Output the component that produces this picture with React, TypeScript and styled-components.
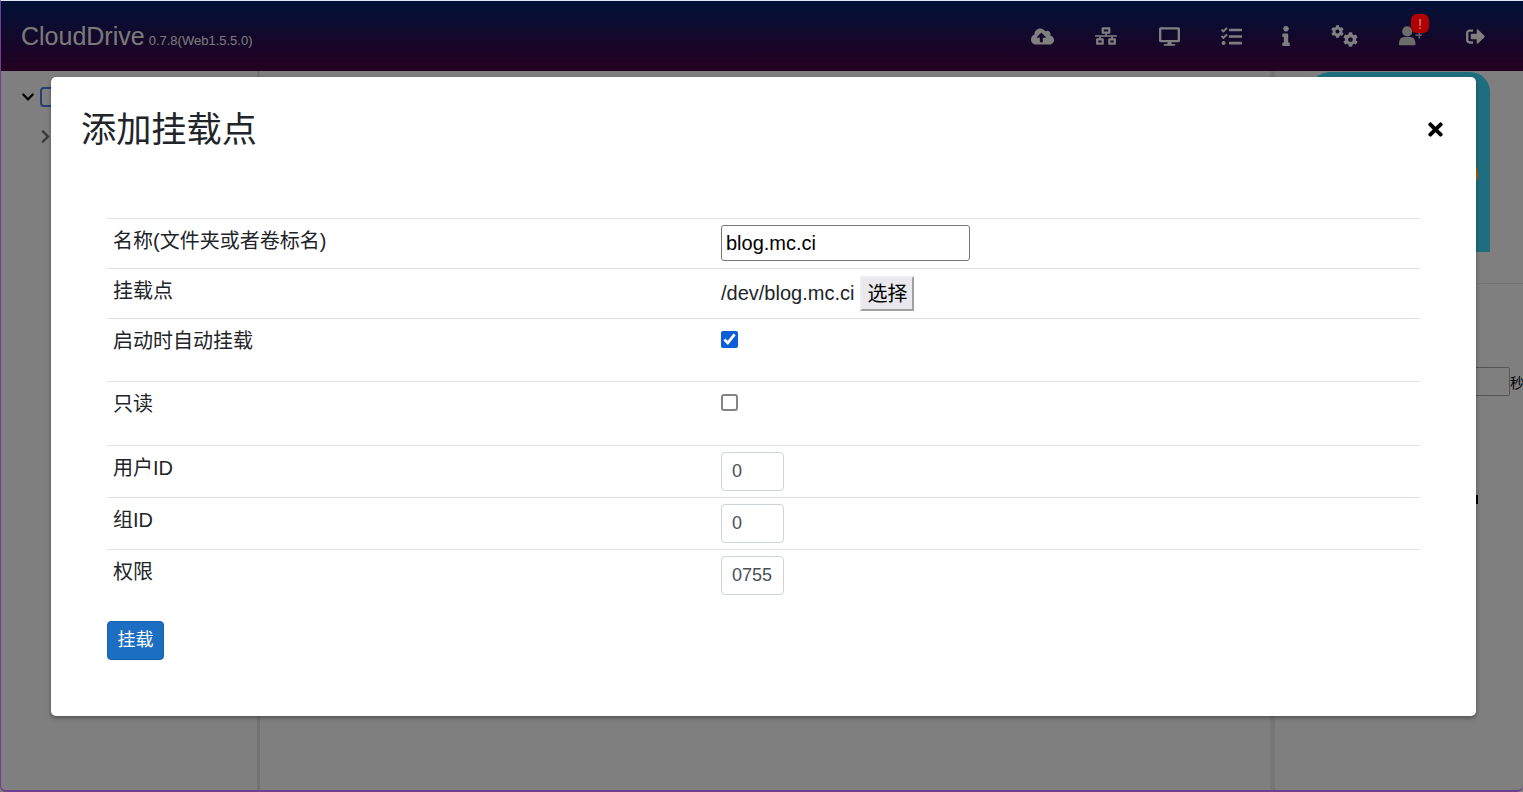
import React from "react";
import styled, { createGlobalStyle } from "styled-components";
import {
  FaChevronDown,
  FaChevronRight,
  FaCloudUploadAlt,
  FaCog,
  FaDesktop,
  FaInfo,
  FaNetworkWired,
  FaSignOutAlt,
  FaTasks,
  FaTimes,
} from "react-icons/fa";

const FONT = `"Liberation Sans", "Noto Sans CJK SC", sans-serif`;

const GlobalStyle = createGlobalStyle`
  html, body {
    margin: 0;
    height: 100%;
    overflow: hidden;
    background: #fff;
    font-family: ${FONT};
    color: #212529;
  }
  * { box-sizing: border-box; }
`;

// two separate gears, the package's cogs icon has another arrangement
const GearsIcon = () => (
  <Gears>
    <FaCog size={13} />
    <FaCog size={15} />
  </Gears>
);

const UserAddIcon = () => (
  <svg width="26" height="22" viewBox="0 0 26 22" fill="#d8d8d8">
    <circle cx="10" cy="6" r="5.5" />
    <path d="M1 20q0-8 6-8h6q6 0 6 8q0 1-1 1H2q-1 0-1-1z" />
    <path d="M23 6v8M19 10h8" stroke="#d8d8d8" strokeWidth="1.2" fill="none" />
  </svg>
);

const navIcons = [
  { icon: <FaCloudUploadAlt size={23} />, width: 24 },
  { icon: <FaNetworkWired size={22} />, width: 24 },
  { icon: <FaDesktop size={21} />, width: 22 },
  { icon: <FaTasks size={21} />, width: 22 },
  { icon: <FaInfo size={20} />, width: 8 },
  { icon: <GearsIcon />, width: 28 },
  { icon: <UserAddIcon />, width: 24, badge: true },
  { icon: <FaSignOutAlt size={19} />, width: 26 },
];

const App = () => {
  return (
    <Page>
      <GlobalStyle />
      <Navbar>
        <Brand>
          CloudDrive<Version>0.7.8(Web1.5.5.0)</Version>
        </Brand>
        <NavIcons>
          {navIcons.map(({ icon, width, badge }, i) => (
            <NavLink key={i} $width={width}>
              {icon}
              {badge && <Badge>!</Badge>}
            </NavLink>
          ))}
        </NavIcons>
      </Navbar>

      <Layout>
        <Sidebar>
          <TreeRow>
            <FaChevronDown size={14} color="#000" />
            <TreeFolder />
          </TreeRow>
          <TreeChild>
            <FaChevronRight size={15} color="#777" />
          </TreeChild>
        </Sidebar>
        <Main />
        <RightPanel>
          <StatusCard>
            <StatusDot />
          </StatusCard>
          <Settings>
            <SettingRow>
              <SettingInput />
              <SettingUnit>秒</SettingUnit>
            </SettingRow>
            <SettingMark />
          </Settings>
        </RightPanel>
      </Layout>

      <Backdrop />
      <WindowFrame />

      <Modal>
        <ModalHeader>
          <ModalTitle>添加挂载点</ModalTitle>
          <CloseButton>
            <FaTimes size={21} />
          </CloseButton>
        </ModalHeader>
        <ModalBody>
          <Row>
            <Label>名称(文件夹或者卷标名)</Label>
            <Value>
              <NameInput defaultValue="blog.mc.ci" />
            </Value>
          </Row>
          <Row>
            <Label>挂载点</Label>
            <Value $center>
              <PathText>/dev/blog.mc.ci</PathText>
              <PickButton>选择</PickButton>
            </Value>
          </Row>
          <Row>
            <Label>启动时自动挂载</Label>
            <Value $tall={50}>
              <Check type="checkbox" defaultChecked />
            </Value>
          </Row>
          <Row>
            <Label>只读</Label>
            <Value $tall={51}>
              <Check type="checkbox" />
            </Value>
          </Row>
          <Row>
            <Label>用户ID</Label>
            <Value>
              <NumberInput defaultValue="0" />
            </Value>
          </Row>
          <Row>
            <Label>组ID</Label>
            <Value>
              <NumberInput defaultValue="0" />
            </Value>
          </Row>
          <Row>
            <Label>权限</Label>
            <Value>
              <NumberInput defaultValue="0755" />
            </Value>
          </Row>
          <MountButton>挂载</MountButton>
        </ModalBody>
      </Modal>
    </Page>
  );
};

export default App;

const Page = styled.div`
  position: relative;
  height: 100vh;
  display: flex;
  flex-direction: column;
  overflow: hidden;
`;

const Navbar = styled.header`
  height: 71px;
  flex: none;
  display: flex;
  align-items: center;
  justify-content: space-between;
  padding: 1px 35px 0 21px;
  background: linear-gradient(180deg, #002470 0%, #480040 100%);
  color: #fff;
`;

const Brand = styled.div`
  font-size: 25px;
  color: #f4f4f4;
  padding-top: 1px;
`;

const Version = styled.small`
  font-size: 13px;
  margin-left: 4px;
`;

const NavIcons = styled.nav`
  display: flex;
  align-items: center;
  gap: 40px;
`;

const NavLink = styled.a<{ $width: number }>`
  position: relative;
  width: ${(p) => p.$width}px;
  display: flex;
  justify-content: center;
  color: #fff;
`;

const Gears = styled.span`
  display: flex;
  flex: none;
  width: 27px;
  height: 22px;
  justify-content: space-between;
  align-items: flex-start;

  svg:last-child {
    align-self: flex-end;
    margin-left: -1px;
  }
`;

const Badge = styled.span`
  position: absolute;
  top: -11px;
  right: -7px;
  z-index: 60;
  width: 18px;
  height: 19px;
  border-radius: 6px;
  background: #b00000;
  color: #d08a8a;
  font-size: 15px;
  line-height: 19px;
  text-align: center;
`;

const Layout = styled.div`
  flex: 1;
  display: flex;
  min-height: 0;
`;

const Sidebar = styled.aside`
  width: 257px;
  flex: none;
  padding: 16px 0 0 21px;
`;

const TreeRow = styled.div`
  display: flex;
  align-items: center;
  gap: 5px;
`;

const TreeFolder = styled.span`
  width: 24px;
  height: 20px;
  border: 2px solid #4a7fe0;
  border-radius: 4px;
`;

const TreeChild = styled.div`
  display: flex;
  padding: 22px 0 0 17px;
`;

const Main = styled.main`
  flex: 1;
  border-left: 3px solid #e6e6e6;
  border-right: 5px solid #ececec;
`;

const RightPanel = styled.aside`
  width: 248px;
  flex: none;
  padding: 1px 0 0 35px;
`;

const StatusCard = styled.div`
  position: relative;
  width: 180px;
  height: 180px;
  border-radius: 20px 20px 0 0;
  background: #3edcff;
`;

const StatusDot = styled.span`
  position: absolute;
  top: 90px;
  right: 12px;
  z-index: 60;
  width: 16px;
  height: 24px;
  border-radius: 50%;
  background: #b85c00;
`;

const Settings = styled.section`
  margin: 31px 0 0 -35px;
  border-top: 1px solid #e6e6e6;
  padding-top: 83px;
`;

const SettingRow = styled.div`
  display: flex;
  align-items: center;
  padding-left: 175px;
`;

const SettingInput = styled.span`
  width: 60px;
  height: 29px;
  flex: none;
  border: 1px solid #aaa;
  border-radius: 2px;
`;

const SettingUnit = styled.span`
  font-size: 14px;
  color: #000;
`;

const SettingMark = styled.span`
  display: block;
  width: 3px;
  height: 9px;
  margin: 99px 0 0 200px;
  background: #000;
`;

const Backdrop = styled.div`
  position: absolute;
  inset: 0;
  z-index: 50;
  background: rgba(0, 0, 0, 0.5);
`;

const WindowFrame = styled.div`
  position: absolute;
  inset: 0;
  z-index: 55;
  border-left: 1px solid #6f3f92;
  border-bottom: 2px solid #6f3f92;
  border-top: 1px solid #dfe6f2;
  border-radius: 0 0 6px 6px;
  pointer-events: none;
`;

const Modal = styled.div`
  position: absolute;
  top: 77px;
  left: 51px;
  z-index: 100;
  width: 1425px;
  height: 639px;
  background: #fff;
  border-radius: 5px;
  box-shadow: 0 2px 4px rgba(0, 0, 0, 0.35);
`;

const ModalHeader = styled.div`
  display: flex;
  align-items: center;
  justify-content: space-between;
  padding: 30px;
`;

const ModalTitle = styled.h2`
  margin: 0;
  font-size: 35.2px;
  font-weight: 400;
  line-height: 45px;
`;

const CloseButton = styled.span`
  display: flex;
  color: #000;
`;

const ModalBody = styled.div`
  padding: 36px 56px 0;
`;

const Row = styled.div`
  display: grid;
  grid-template-columns: 608px 1fr;
  padding: 6px;
  border-top: 1px solid #dee2e6;
`;

const Label = styled.div`
  padding-top: 1px;
  font-size: 20px;
  line-height: 30px;
`;

const Value = styled.div<{ $center?: boolean; $tall?: number }>`
  display: flex;
  align-items: ${(p) => (p.$center ? "center" : "flex-start")};
  min-height: ${(p) => p.$tall ?? 37}px;
  font-size: 20px;
`;

const NameInput = styled.input`
  width: 249px;
  height: 36px;
  padding: 1px 4px;
  border: 1px solid #767676;
  border-radius: 3px;
  font-family: ${FONT};
  font-size: 20px;
  color: #000;
`;

const PathText = styled.span`
  margin-right: 6px;
`;

const PickButton = styled.button`
  width: 54px;
  height: 35px;
  padding: 0 0 2px;
  border: 2px solid;
  border-color: #eeeeee #a0a0a0 #a0a0a0 #eeeeee;
  background: #e9e9ed;
  font-family: ${FONT};
  font-size: 20px;
  color: #000;
`;

const Check = styled.input`
  width: 17px;
  height: 17px;
  margin: 6px 0 0;
  accent-color: #0b5ed7;

  &:not(:checked) {
    appearance: none;
    border: 2px solid #858585;
    border-radius: 3px;
    background: #fff;
  }
`;

const NumberInput = styled.input`
  width: 63px;
  height: 39px;
  padding: 6px 10px;
  border: 1px solid #ced4da;
  border-radius: 4px;
  font-family: ${FONT};
  font-size: 18px;
  color: #495057;
`;

const MountButton = styled.button`
  display: block;
  margin-top: 20px;
  width: 57px;
  height: 39px;
  padding: 0 0 5px;
  border: 1px solid #1861ac;
  border-radius: 4px;
  background: #1b6ec2;
  color: #fff;
  font-family: ${FONT};
  font-size: 18px;
`;
